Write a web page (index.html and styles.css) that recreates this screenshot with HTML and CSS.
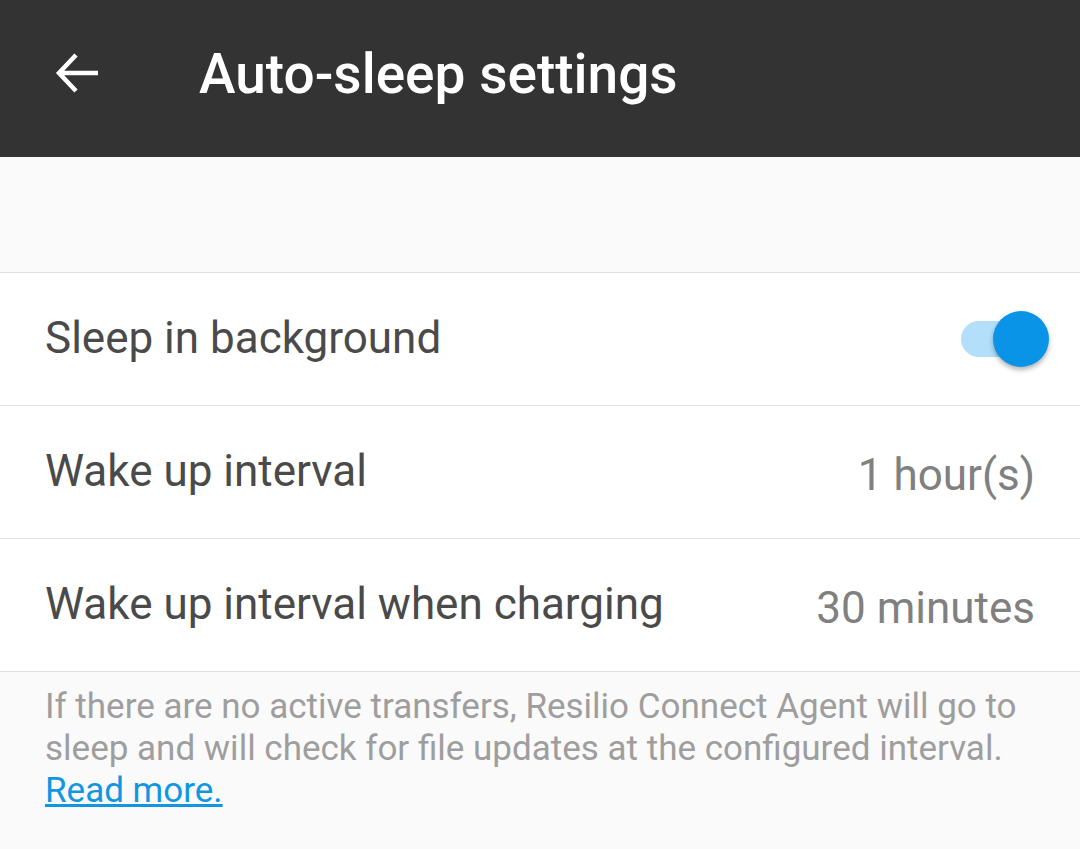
FILE: index.html
```html
<!DOCTYPE html>
<html lang="en">
<head>
  <meta charset="UTF-8" />
  <meta name="viewport" content="width=device-width, initial-scale=1.0"/>
  <title>Auto-sleep settings</title>
  <link rel="stylesheet" href="styles.css">
</head>
<body>
  <div class="toolbar">
    <button class="back" aria-label="Back">
      <svg width="48" height="48" viewBox="0 0 48 48">
        <path d="M44 24H6M22 6L5 24l17 18" fill="none" stroke="#fff" stroke-width="4.5"/>
      </svg>
    </button>
    <h1>Auto-sleep settings</h1>
  </div>

  <div class="spacer"></div>

  <div class="list">
    <div class="row">
      <span class="row-title">Sleep in background</span>
      <span class="switch on"><span class="thumb"></span></span>
    </div>
    <div class="row">
      <span class="row-title">Wake up interval</span>
      <span class="row-value">1 hour(s)</span>
    </div>
    <div class="row">
      <span class="row-title">Wake up interval when charging</span>
      <span class="row-value">30 minutes</span>
    </div>
  </div>

  <p class="hint">
    If there are no active transfers, Resilio Connect Agent will go to sleep and will check for file updates at the configured interval.<br>
    <a href="#">Read more.</a>
  </p>
</body>
</html>
```

FILE: styles.css
```css
* {
  box-sizing: border-box;
  margin: 0;
  padding: 0;
}

body {
  font-family: Roboto, "Noto Sans", sans-serif;
  background: #fafafa;
  width: 1080px;
  height: 849px;
  overflow: hidden;
}

.toolbar {
  height: 157px;
  background: #333333;
  display: flex;
  align-items: center;
}

.back {
  width: 48px;
  height: 48px;
  margin-left: 54px;
  margin-top: -12px;
  background: none;
  border: none;
  display: flex;
}

.toolbar h1 {
  margin-left: 97px;
  color: #fff;
  font-size: 55px;
  font-weight: 500;
  margin-top: -10px;
}

.spacer {
  height: 115px;
}

.list {
  background: #fff;
  border-top: 1px solid #e0e0e0;
}

.row {
  height: 133px;
  border-bottom: 1px solid #e0e0e0;
  display: flex;
  align-items: center;
  justify-content: space-between;
  padding: 0 45px 0 45px;
  font-size: 44px;
}

.row-title {
  color: #4a4a4a;
  margin-top: -2px;
}

.row-value {
  color: #808080;
  margin-top: 6px;
}

.switch {
  position: relative;
  width: 69px;
  height: 36px;
  border-radius: 18px;
  background: #b3dffa;
  margin-right: 5px;
}

.thumb {
  position: absolute;
  right: -19px;
  top: -10px;
  width: 56px;
  height: 56px;
  border-radius: 50%;
  background: #0a94e8;
  box-shadow: 0 3px 5px rgba(0, 0, 0, 0.3);
}

.hint {
  padding: 14px 45px 0 45px;
  color: #9e9e9e;
  font-size: 35px;
  line-height: 42px;
}

.hint a {
  color: #1196e0;
}
```
